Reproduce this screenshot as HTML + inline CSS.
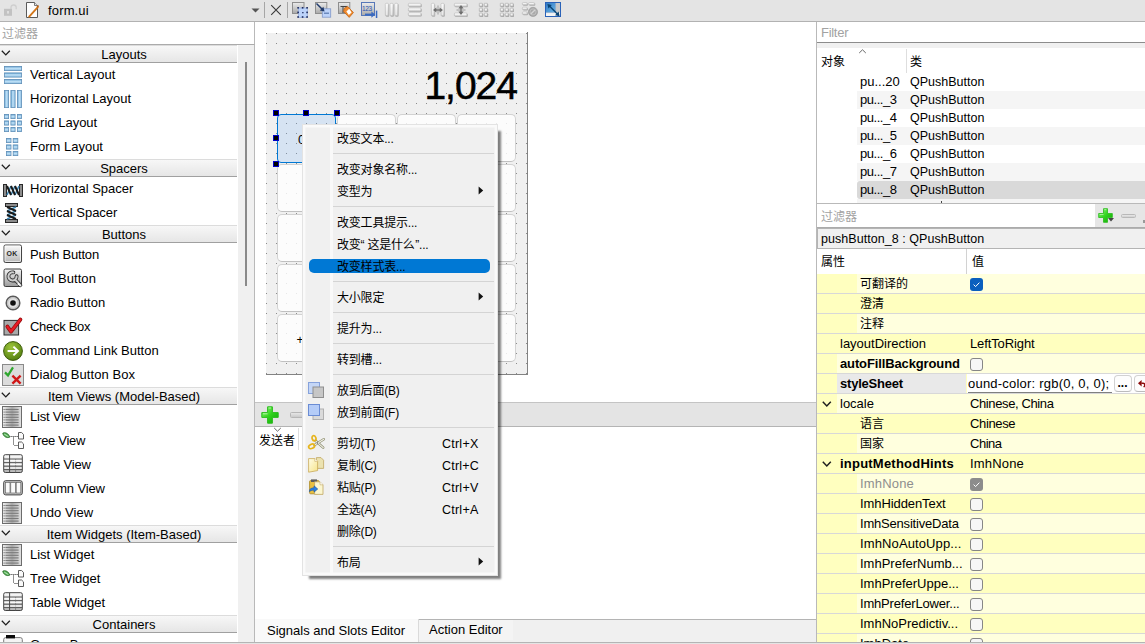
<!DOCTYPE html><html><head><meta charset="utf-8"><title>Qt Designer</title><style>
*{box-sizing:border-box}
html,body{margin:0;padding:0}
body{width:1145px;height:644px;position:relative;overflow:hidden;background:#f0f0f0;font:13px/16px "Liberation Sans","Noto Sans CJK SC",sans-serif;color:#000}
.a{position:absolute}
.t{position:absolute;white-space:nowrap;height:16px;line-height:16px}
.c{font-size:12px}
.hd{position:absolute;left:0;width:237px;height:18px;border-top:1px solid #dcdcdc;border-bottom:1px solid #a0a0a0;background:linear-gradient(#f7f7f7,#e6e6e6)}
.b{font-weight:bold}
.btn{position:absolute;width:59px;height:48px;border:1px solid #d2d2d2;border-bottom-color:#c0c0c0;border-radius:5px;background:rgba(255,255,255,.8)}
.mi{position:absolute;left:337px;font-size:12px;letter-spacing:-0.2px}
.sep{position:absolute;left:333px;width:161px;height:1px;background:#d4d4d4}
.cb{position:absolute;left:970px;width:13px;height:13px;border:1px solid #868686;border-radius:3px;background:#f6f6f6}
svg{position:absolute;overflow:visible}
</style></head><body>
<div class="a" style="left:0;top:0;width:1145px;height:22px;background:#e4e4e4;border-bottom:1px solid #b2b2b2"></div>
<svg style="left:3px;top:3px" width="14" height="14" viewBox="0 0 14 14"><path d="M8 7 V4.6 A2.6 2.6 0 0 1 13.2 4.6 V6.3" fill="none" stroke="#cfcfcf" stroke-width="1.3"/><rect x="1" y="5.8" width="8" height="7" fill="#c2c2c2"/><rect x="4" y="8" width="2" height="2.6" fill="#dedede"/></svg>
<svg style="left:26px;top:2px" width="13" height="16" viewBox="0 0 13 16"><path d="M0.5 0.5 H8.5 L11.5 3.5 V15.5 H0.5 Z" fill="#fdfdfd" stroke="#5a5a5a" stroke-width="1"/><path d="M8.5 0.5 V3.5 H11.5" fill="#e8e8e8" stroke="#5a5a5a" stroke-width=".8"/><path d="M3.2 14.6 L11.8 5.2" stroke="#d2761a" stroke-width="1.9" stroke-linecap="round"/><path d="M11 5 L12.6 3.6" stroke="#b85c10" stroke-width="1.4"/></svg>
<div class="t " style="letter-spacing:0.152px;left:48px;top:3px;">form.ui</div>
<svg style="left:251px;top:8px" width="9" height="5" viewBox="0 0 9 5"><path d="M0.5 0.5 H8.5 L4.5 4.5 Z" fill="#555"/></svg>
<div class="a" style="left:264px;top:2px;width:1px;height:16px;background:#a6a6a6"></div>
<svg style="left:270px;top:4px" width="12" height="12" viewBox="0 0 12 12"><path d="M1.2 1.2 L10.8 10.8 M10.8 1.2 L1.2 10.8" stroke="#3a3a3a" stroke-width="1.1"/></svg>
<div class="a" style="left:287px;top:2px;width:1px;height:16px;background:#a6a6a6"></div>
<svg style="left:292px;top:2px" width="16" height="16" viewBox="0 0 16 16"><defs><linearGradient id="gq" x1="0" y1="0" x2="0" y2="1"><stop offset="0" stop-color="#ececec"/><stop offset="1" stop-color="#a8a8a8"/></linearGradient><linearGradient id="gb" x1="0" y1="0" x2="0" y2="1"><stop offset="0" stop-color="#f6f6f6"/><stop offset="1" stop-color="#c6c6c6"/></linearGradient></defs><rect x="0.5" y="0.5" width="11.5" height="11" fill="url(#gq)" stroke="#8e8e8e"/><rect x="6.3" y="6" width="9" height="9.3" fill="#bcd3fa" stroke="#8aa6de" stroke-width=".6"/><g fill="#1c2a5c"><rect x="5.3" y="5" width="1.6" height="1.6"/><rect x="9.8" y="5" width="1.6" height="1.6"/><rect x="14.3" y="5" width="1.6" height="1.6"/><rect x="5.3" y="9.6" width="1.6" height="1.6"/><rect x="14.3" y="9.6" width="1.6" height="1.6"/><rect x="5.3" y="14.2" width="1.6" height="1.6"/><rect x="9.8" y="14.2" width="1.6" height="1.6"/><rect x="14.3" y="14.2" width="1.6" height="1.6"/><rect x="10.2" y="10" width="1.3" height="1.3"/></g></svg>
<svg style="left:315px;top:2px" width="16" height="16" viewBox="0 0 16 16"><rect x="0.5" y="0.5" width="11.3" height="11" fill="url(#gq)" stroke="#8e8e8e"/><rect x="7.3" y="6.8" width="8.4" height="8.4" fill="#bcd3fa" stroke="#8098c8" stroke-width=".8"/><path d="M1.5 1.5 L8 8" stroke="#203a6a" stroke-width="1.5"/><path d="M9.6 9.6 L4.8 8.4 L8.4 4.8 Z" fill="#203a6a"/><rect x="9" y="10.6" width="5" height="1.2" fill="#5878b0"/></svg>
<svg style="left:338px;top:2px" width="16" height="16" viewBox="0 0 16 16"><rect x="0.5" y="0.5" width="11.3" height="11" fill="url(#gq)" stroke="#8e8e8e"/><path d="M2.5 4.5 H9" stroke="#444" stroke-width="1"/><path d="M5 4.5 V11" stroke="#444" stroke-width="1"/><path d="M6.2 6.4 L9.6 4.4 L15.4 10.6 L11.2 15.4 L5.6 9.6 Z" fill="#ee8a2e" stroke="#c46210" stroke-width=".8"/><path d="M8.4 9.4 L11.2 6.8 L13.6 10.4 L10.8 13 Z" fill="#fff"/></svg>
<svg style="left:361px;top:2px" width="17" height="16" viewBox="0 0 17 16"><rect x="0.5" y="0.5" width="13" height="13" fill="url(#gq)" stroke="#5878b8"/><text x="1" y="8.5" font-family="Liberation Sans,sans-serif" font-size="6.5" fill="#2a52b0" letter-spacing="-.4">123</text><path d="M4 12.6 H11" stroke="#3a6ac0" stroke-width="2"/><path d="M10.4 9.4 L14.2 12.6 L10.4 15.8 Z" fill="#3a6ac0"/><rect x="14.8" y="8.6" width="1.5" height="7.4" fill="#3a6ac0"/></svg>
<svg style="left:385px;top:3px" width="14" height="14" viewBox="0 0 14 14"><rect x="1.0" y="1.0" width="3.2" height="12.8" rx="1" fill="#9c9c9c" fill-opacity=".75"/><rect x="0.3" y="0.3" width="3.2" height="12.8" rx="1" fill="url(#gb)" stroke="#b9b9b9" stroke-width=".6"/><rect x="0.8999999999999999" y="0.8999999999999999" width="1.6" height="11.200000000000001" rx="0.5" fill="#fff" fill-opacity=".55"/><rect x="5.7" y="1.0" width="3.2" height="12.8" rx="1" fill="#9c9c9c" fill-opacity=".75"/><rect x="5" y="0.3" width="3.2" height="12.8" rx="1" fill="url(#gb)" stroke="#b9b9b9" stroke-width=".6"/><rect x="5.6" y="0.8999999999999999" width="1.6" height="11.200000000000001" rx="0.5" fill="#fff" fill-opacity=".55"/><rect x="10.399999999999999" y="1.0" width="3.2" height="12.8" rx="1" fill="#9c9c9c" fill-opacity=".75"/><rect x="9.7" y="0.3" width="3.2" height="12.8" rx="1" fill="url(#gb)" stroke="#b9b9b9" stroke-width=".6"/><rect x="10.299999999999999" y="0.8999999999999999" width="1.6" height="11.200000000000001" rx="0.5" fill="#fff" fill-opacity=".55"/></svg>
<svg style="left:408px;top:3px" width="14" height="14" viewBox="0 0 14 14"><rect x="1.0" y="1.0" width="12.8" height="3.2" rx="1" fill="#9c9c9c" fill-opacity=".75"/><rect x="0.3" y="0.3" width="12.8" height="3.2" rx="1" fill="url(#gb)" stroke="#b9b9b9" stroke-width=".6"/><rect x="0.8999999999999999" y="0.8999999999999999" width="11.200000000000001" height="1.6" rx="0.5" fill="#fff" fill-opacity=".55"/><rect x="1.0" y="5.7" width="12.8" height="3.2" rx="1" fill="#9c9c9c" fill-opacity=".75"/><rect x="0.3" y="5" width="12.8" height="3.2" rx="1" fill="url(#gb)" stroke="#b9b9b9" stroke-width=".6"/><rect x="0.8999999999999999" y="5.6" width="11.200000000000001" height="1.6" rx="0.5" fill="#fff" fill-opacity=".55"/><rect x="1.0" y="10.399999999999999" width="12.8" height="3.2" rx="1" fill="#9c9c9c" fill-opacity=".75"/><rect x="0.3" y="9.7" width="12.8" height="3.2" rx="1" fill="url(#gb)" stroke="#b9b9b9" stroke-width=".6"/><rect x="0.8999999999999999" y="10.299999999999999" width="11.200000000000001" height="1.6" rx="0.5" fill="#fff" fill-opacity=".55"/></svg>
<svg style="left:431px;top:3px" width="14" height="14" viewBox="0 0 14 14"><rect x="1.0" y="1.0" width="3.2" height="12.8" rx="1" fill="#9c9c9c" fill-opacity=".75"/><rect x="0.3" y="0.3" width="3.2" height="12.8" rx="1" fill="url(#gb)" stroke="#b9b9b9" stroke-width=".6"/><rect x="0.8999999999999999" y="0.8999999999999999" width="1.6" height="11.200000000000001" rx="0.5" fill="#fff" fill-opacity=".55"/><rect x="10.7" y="1.0" width="3.2" height="12.8" rx="1" fill="#9c9c9c" fill-opacity=".75"/><rect x="10" y="0.3" width="3.2" height="12.8" rx="1" fill="url(#gb)" stroke="#b9b9b9" stroke-width=".6"/><rect x="10.6" y="0.8999999999999999" width="1.6" height="11.200000000000001" rx="0.5" fill="#fff" fill-opacity=".55"/><path d="M3.5 7 H10.5" stroke="#6e6e6e" stroke-width="1.4"/><path d="M2 7 L5.4 4.4 V9.6 Z M12 7 L8.6 4.4 V9.6 Z" fill="#6e6e6e"/><path d="M7 2.5 V11.5" stroke="#8a8a8a" stroke-width=".8"/></svg>
<svg style="left:454px;top:3px" width="14" height="14" viewBox="0 0 14 14"><rect x="1.0" y="1.0" width="12.8" height="3.2" rx="1" fill="#9c9c9c" fill-opacity=".75"/><rect x="0.3" y="0.3" width="12.8" height="3.2" rx="1" fill="url(#gb)" stroke="#b9b9b9" stroke-width=".6"/><rect x="0.8999999999999999" y="0.8999999999999999" width="11.200000000000001" height="1.6" rx="0.5" fill="#fff" fill-opacity=".55"/><rect x="1.0" y="10.7" width="12.8" height="3.2" rx="1" fill="#9c9c9c" fill-opacity=".75"/><rect x="0.3" y="10" width="12.8" height="3.2" rx="1" fill="url(#gb)" stroke="#b9b9b9" stroke-width=".6"/><rect x="0.8999999999999999" y="10.6" width="11.200000000000001" height="1.6" rx="0.5" fill="#fff" fill-opacity=".55"/><path d="M7 3.5 V10.5" stroke="#6e6e6e" stroke-width="1.4"/><path d="M7 2 L4.4 5.4 H9.6 Z M7 12 L4.4 8.6 H9.6 Z" fill="#6e6e6e"/><path d="M2.5 7 H11.5" stroke="#8a8a8a" stroke-width=".8"/></svg>
<svg style="left:479px;top:3px" width="9" height="14" viewBox="0 0 9 14"><rect x="1.0" y="1.0" width="3.2" height="3.2" rx="0.4" fill="#9c9c9c" fill-opacity=".75"/><rect x="0.3" y="0.3" width="3.2" height="3.2" rx="0.4" fill="url(#gb)" stroke="#a4a4a4" stroke-width=".6"/><rect x="0.8999999999999999" y="0.8999999999999999" width="1.6" height="1.6" rx="0.2" fill="#fff" fill-opacity=".55"/><rect x="6.0" y="1.0" width="3.2" height="3.2" rx="0.4" fill="#9c9c9c" fill-opacity=".75"/><rect x="5.3" y="0.3" width="3.2" height="3.2" rx="0.4" fill="url(#gb)" stroke="#a4a4a4" stroke-width=".6"/><rect x="5.8999999999999995" y="0.8999999999999999" width="1.6" height="1.6" rx="0.2" fill="#fff" fill-opacity=".55"/><rect x="1.0" y="5.9" width="3.2" height="3.2" rx="0.4" fill="#9c9c9c" fill-opacity=".75"/><rect x="0.3" y="5.2" width="3.2" height="3.2" rx="0.4" fill="url(#gb)" stroke="#a4a4a4" stroke-width=".6"/><rect x="0.8999999999999999" y="5.8" width="1.6" height="1.6" rx="0.2" fill="#fff" fill-opacity=".55"/><rect x="6.0" y="5.9" width="3.2" height="3.2" rx="0.4" fill="#9c9c9c" fill-opacity=".75"/><rect x="5.3" y="5.2" width="3.2" height="3.2" rx="0.4" fill="url(#gb)" stroke="#a4a4a4" stroke-width=".6"/><rect x="5.8999999999999995" y="5.8" width="1.6" height="1.6" rx="0.2" fill="#fff" fill-opacity=".55"/><rect x="1.0" y="10.8" width="3.2" height="3.2" rx="0.4" fill="#9c9c9c" fill-opacity=".75"/><rect x="0.3" y="10.100000000000001" width="3.2" height="3.2" rx="0.4" fill="url(#gb)" stroke="#a4a4a4" stroke-width=".6"/><rect x="0.8999999999999999" y="10.700000000000001" width="1.6" height="1.6" rx="0.2" fill="#fff" fill-opacity=".55"/><rect x="6.0" y="10.8" width="3.2" height="3.2" rx="0.4" fill="#9c9c9c" fill-opacity=".75"/><rect x="5.3" y="10.100000000000001" width="3.2" height="3.2" rx="0.4" fill="url(#gb)" stroke="#a4a4a4" stroke-width=".6"/><rect x="5.8999999999999995" y="10.700000000000001" width="1.6" height="1.6" rx="0.2" fill="#fff" fill-opacity=".55"/></svg>
<svg style="left:500px;top:3px" width="14" height="14" viewBox="0 0 14 14"><rect x="1.0" y="1.0" width="3.2" height="3.2" rx="0.4" fill="#9c9c9c" fill-opacity=".75"/><rect x="0.3" y="0.3" width="3.2" height="3.2" rx="0.4" fill="url(#gb)" stroke="#a4a4a4" stroke-width=".6"/><rect x="0.8999999999999999" y="0.8999999999999999" width="1.6" height="1.6" rx="0.2" fill="#fff" fill-opacity=".55"/><rect x="5.9" y="1.0" width="3.2" height="3.2" rx="0.4" fill="#9c9c9c" fill-opacity=".75"/><rect x="5.2" y="0.3" width="3.2" height="3.2" rx="0.4" fill="url(#gb)" stroke="#a4a4a4" stroke-width=".6"/><rect x="5.8" y="0.8999999999999999" width="1.6" height="1.6" rx="0.2" fill="#fff" fill-opacity=".55"/><rect x="10.8" y="1.0" width="3.2" height="3.2" rx="0.4" fill="#9c9c9c" fill-opacity=".75"/><rect x="10.100000000000001" y="0.3" width="3.2" height="3.2" rx="0.4" fill="url(#gb)" stroke="#a4a4a4" stroke-width=".6"/><rect x="10.700000000000001" y="0.8999999999999999" width="1.6" height="1.6" rx="0.2" fill="#fff" fill-opacity=".55"/><rect x="1.0" y="5.9" width="3.2" height="3.2" rx="0.4" fill="#9c9c9c" fill-opacity=".75"/><rect x="0.3" y="5.2" width="3.2" height="3.2" rx="0.4" fill="url(#gb)" stroke="#a4a4a4" stroke-width=".6"/><rect x="0.8999999999999999" y="5.8" width="1.6" height="1.6" rx="0.2" fill="#fff" fill-opacity=".55"/><rect x="5.9" y="5.9" width="3.2" height="3.2" rx="0.4" fill="#9c9c9c" fill-opacity=".75"/><rect x="5.2" y="5.2" width="3.2" height="3.2" rx="0.4" fill="url(#gb)" stroke="#a4a4a4" stroke-width=".6"/><rect x="5.8" y="5.8" width="1.6" height="1.6" rx="0.2" fill="#fff" fill-opacity=".55"/><rect x="10.8" y="5.9" width="3.2" height="3.2" rx="0.4" fill="#9c9c9c" fill-opacity=".75"/><rect x="10.100000000000001" y="5.2" width="3.2" height="3.2" rx="0.4" fill="url(#gb)" stroke="#a4a4a4" stroke-width=".6"/><rect x="10.700000000000001" y="5.8" width="1.6" height="1.6" rx="0.2" fill="#fff" fill-opacity=".55"/><rect x="1.0" y="10.8" width="3.2" height="3.2" rx="0.4" fill="#9c9c9c" fill-opacity=".75"/><rect x="0.3" y="10.100000000000001" width="3.2" height="3.2" rx="0.4" fill="url(#gb)" stroke="#a4a4a4" stroke-width=".6"/><rect x="0.8999999999999999" y="10.700000000000001" width="1.6" height="1.6" rx="0.2" fill="#fff" fill-opacity=".55"/><rect x="5.9" y="10.8" width="3.2" height="3.2" rx="0.4" fill="#9c9c9c" fill-opacity=".75"/><rect x="5.2" y="10.100000000000001" width="3.2" height="3.2" rx="0.4" fill="url(#gb)" stroke="#a4a4a4" stroke-width=".6"/><rect x="5.8" y="10.700000000000001" width="1.6" height="1.6" rx="0.2" fill="#fff" fill-opacity=".55"/><rect x="10.8" y="10.8" width="3.2" height="3.2" rx="0.4" fill="#9c9c9c" fill-opacity=".75"/><rect x="10.100000000000001" y="10.100000000000001" width="3.2" height="3.2" rx="0.4" fill="url(#gb)" stroke="#a4a4a4" stroke-width=".6"/><rect x="10.700000000000001" y="10.700000000000001" width="1.6" height="1.6" rx="0.2" fill="#fff" fill-opacity=".55"/></svg>
<svg style="left:522px;top:2px" width="16" height="16" viewBox="0 0 16 16"><rect x="1.0" y="1.2" width="5" height="2.6" rx="1" fill="#9c9c9c" fill-opacity=".75"/><rect x="0.3" y="0.5" width="5" height="2.6" rx="1" fill="url(#gb)" stroke="#b9b9b9" stroke-width=".6"/><rect x="0.8999999999999999" y="1.1" width="3.4" height="1.0" rx="0.5" fill="#fff" fill-opacity=".55"/><rect x="7.3" y="1.2" width="6" height="2.6" rx="1" fill="#9c9c9c" fill-opacity=".75"/><rect x="6.6" y="0.5" width="6" height="2.6" rx="1" fill="url(#gb)" stroke="#b9b9b9" stroke-width=".6"/><rect x="7.199999999999999" y="1.1" width="4.4" height="1.0" rx="0.5" fill="#fff" fill-opacity=".55"/><rect x="1.0" y="5.9" width="5" height="2.6" rx="1" fill="#9c9c9c" fill-opacity=".75"/><rect x="0.3" y="5.2" width="5" height="2.6" rx="1" fill="url(#gb)" stroke="#b9b9b9" stroke-width=".6"/><rect x="0.8999999999999999" y="5.8" width="3.4" height="1.0" rx="0.5" fill="#fff" fill-opacity=".55"/><rect x="1.0" y="10.6" width="5" height="2.6" rx="1" fill="#9c9c9c" fill-opacity=".75"/><rect x="0.3" y="9.9" width="5" height="2.6" rx="1" fill="url(#gb)" stroke="#b9b9b9" stroke-width=".6"/><rect x="0.8999999999999999" y="10.5" width="3.4" height="1.0" rx="0.5" fill="#fff" fill-opacity=".55"/><circle cx="11" cy="9.9" r="4.6" fill="#a9a9a9" stroke="#989898" stroke-width=".6"/><path d="M8.8 12 L13.2 7.8" stroke="#d4d4d4" stroke-width="1.3"/><circle cx="11" cy="9.9" r="3" fill="none" stroke="#c4c4c4" stroke-width=".8"/></svg>
<svg style="left:545px;top:2px" width="16" height="15" viewBox="0 0 16 15"><defs><linearGradient id="gz" x1="0" y1="0" x2="1" y2="1"><stop offset="0" stop-color="#2f78c4"/><stop offset="1" stop-color="#86d0f2"/></linearGradient></defs><rect x="0.5" y="0.5" width="15" height="14" fill="url(#gz)" stroke="#2a62b8"/><rect x="10.6" y="1" width="4.4" height="13" fill="#c9c9c9"/><rect x="1" y="10.6" width="14" height="3.4" fill="#f4f4f4"/><path d="M10.6 1 V10.6 H1" fill="none" stroke="#8fa8c8" stroke-width=".6"/><path d="M4 3.6 L12.4 12" stroke="#0a4474" stroke-width="1.4"/><path d="M2.4 2 L6.8 3 L3.4 6.4 Z M14.6 14.2 L10 13.2 L13.6 9.6 Z" fill="#0a4474"/></svg>
<div class="a" style="left:0;top:22px;width:255px;height:23px;background:#fff;border-right:1px solid #b9b9b9;border-bottom:1px solid #ababab"></div>
<div class="t c" style="left:2px;top:25.5px;color:#a2a2a2">过滤器</div>
<div class="a" style="left:0;top:45px;width:238px;height:597px;background:#fff"></div>
<div class="a" style="left:238px;top:45px;width:17px;height:597px;background:#f0f0f0;border-right:1px solid #b9b9b9"></div>
<div class="a" style="left:245px;top:62px;width:2px;height:224px;background:#8a8a8a"></div>
<svg width="0" height="0" style="left:0;top:0"><defs><linearGradient id="lb" x1="0" y1="0" x2="0" y2="1"><stop offset="0" stop-color="#5fa0d0"/><stop offset=".45" stop-color="#bfe0f6"/><stop offset="1" stop-color="#8fc0e4"/></linearGradient>
<linearGradient id="lv" x1="0" y1="0" x2="1" y2="0"><stop offset="0" stop-color="#5fa0d0"/><stop offset=".45" stop-color="#bfe0f6"/><stop offset="1" stop-color="#8fc0e4"/></linearGradient>
<linearGradient id="gg" x1="0" y1="0" x2="0" y2="1"><stop offset="0" stop-color="#f4f4f4"/><stop offset="1" stop-color="#9c9c9c"/></linearGradient>
<linearGradient id="gl" x1="0" y1="0" x2="1" y2="0"><stop offset="0" stop-color="#f0f0f0"/><stop offset=".5" stop-color="#a8a8a8"/><stop offset="1" stop-color="#e4e4e4"/></linearGradient>
<linearGradient id="gp" x1="0" y1="0" x2="0" y2="1"><stop offset="0" stop-color="#fbfbfb"/><stop offset="1" stop-color="#b8b8b8"/></linearGradient>
<radialGradient id="grn" cx=".4" cy=".3" r=".8"><stop offset="0" stop-color="#9cc43a"/><stop offset="1" stop-color="#4e7a0c"/></radialGradient>
</defs></svg>
<div class="hd" style="top:45px"></div>
<svg style="left:1px;top:50px" width="10" height="6" viewBox="0 0 10 6"><path d="M0.8 0.8 L4.8 4.9 L8.8 0.8" fill="none" stroke="#1e1e1e" stroke-width="1.3"/></svg>
<div class="t" style="left:4px;width:240px;text-align:center;top:47px">Layouts</div>
<svg style="left:4px;top:66px" width="18" height="18" viewBox="0 0 18 18"><rect x="0.4" y="0.4" width="17.2" height="4.2" fill="url(#lb)" stroke="#5f8fb8" stroke-width=".8"/><rect x="0.4" y="6.9" width="17.2" height="4.2" fill="url(#lb)" stroke="#5f8fb8" stroke-width=".8"/><rect x="0.4" y="13.4" width="17.2" height="4.2" fill="url(#lb)" stroke="#5f8fb8" stroke-width=".8"/></svg>
<div class="t " style="left:30px;top:67px;">Vertical Layout</div>
<svg style="left:4px;top:90px" width="18" height="18" viewBox="0 0 18 18"><rect x="0.4" y="0.4" width="4.2" height="17.2" fill="url(#lv)" stroke="#5f8fb8" stroke-width=".8"/><rect x="6.9" y="0.4" width="4.2" height="17.2" fill="url(#lv)" stroke="#5f8fb8" stroke-width=".8"/><rect x="13.4" y="0.4" width="4.2" height="17.2" fill="url(#lv)" stroke="#5f8fb8" stroke-width=".8"/></svg>
<div class="t " style="left:30px;top:91px;">Horizontal Layout</div>
<svg style="left:4px;top:114px" width="18" height="18" viewBox="0 0 18 18"><rect x="0.4" y="0.4" width="4.2" height="4.2" fill="url(#lb)" stroke="#5f8fb8" stroke-width=".8"/><rect x="6.9" y="0.4" width="4.2" height="4.2" fill="url(#lb)" stroke="#5f8fb8" stroke-width=".8"/><rect x="13.4" y="0.4" width="4.2" height="4.2" fill="url(#lb)" stroke="#5f8fb8" stroke-width=".8"/><rect x="0.4" y="6.9" width="4.2" height="4.2" fill="url(#lb)" stroke="#5f8fb8" stroke-width=".8"/><rect x="6.9" y="6.9" width="4.2" height="4.2" fill="url(#lb)" stroke="#5f8fb8" stroke-width=".8"/><rect x="13.4" y="6.9" width="4.2" height="4.2" fill="url(#lb)" stroke="#5f8fb8" stroke-width=".8"/><rect x="0.4" y="13.4" width="4.2" height="4.2" fill="url(#lb)" stroke="#5f8fb8" stroke-width=".8"/><rect x="6.9" y="13.4" width="4.2" height="4.2" fill="url(#lb)" stroke="#5f8fb8" stroke-width=".8"/><rect x="13.4" y="13.4" width="4.2" height="4.2" fill="url(#lb)" stroke="#5f8fb8" stroke-width=".8"/></svg>
<div class="t " style="left:30px;top:115px;">Grid Layout</div>
<svg style="left:6px;top:138px" width="13" height="18" viewBox="0 0 13 18"><rect x="0.4" y="0.4" width="4.6" height="4.2" fill="url(#lb)" stroke="#5f8fb8" stroke-width=".8"/><rect x="7.2" y="0.4" width="4.6" height="4.2" fill="url(#lb)" stroke="#5f8fb8" stroke-width=".8"/><rect x="0.4" y="6.9" width="4.6" height="4.2" fill="url(#lb)" stroke="#5f8fb8" stroke-width=".8"/><rect x="7.2" y="6.9" width="4.6" height="4.2" fill="url(#lb)" stroke="#5f8fb8" stroke-width=".8"/><rect x="0.4" y="13.4" width="4.6" height="4.2" fill="url(#lb)" stroke="#5f8fb8" stroke-width=".8"/><rect x="7.2" y="13.4" width="4.6" height="4.2" fill="url(#lb)" stroke="#5f8fb8" stroke-width=".8"/></svg>
<div class="t " style="left:30px;top:139px;">Form Layout</div>
<div class="hd" style="top:159px"></div>
<svg style="left:1px;top:164px" width="10" height="6" viewBox="0 0 10 6"><path d="M0.8 0.8 L4.8 4.9 L8.8 0.8" fill="none" stroke="#1e1e1e" stroke-width="1.3"/></svg>
<div class="t" style="left:4px;width:240px;text-align:center;top:161px">Spacers</div>
<svg style="left:3px;top:184px" width="20" height="13" viewBox="0 0 20 13"><rect x="0.5" y="0.5" width="3" height="12" fill="#8c8c8c" stroke="#2a2a2a"/><rect x="16.5" y="0.5" width="3" height="12" fill="#8c8c8c" stroke="#2a2a2a"/><path d="M4 11 L8 2 M8 11 L12 2 M12 11 L16 2" stroke="#3c86b4" stroke-width="1.6"/><path d="M4 2 L8 11 M8 2 L12 11 M12 2 L16 11" stroke="#1a1a1a" stroke-width="2"/></svg>
<div class="t " style="left:30px;top:181px;">Horizontal Spacer</div>
<svg style="left:5px;top:203px" width="13" height="20" viewBox="0 0 13 20"><rect x="0.5" y="0.5" width="12" height="3" fill="#8c8c8c" stroke="#2a2a2a"/><rect x="0.5" y="16.5" width="12" height="3" fill="#8c8c8c" stroke="#2a2a2a"/><path d="M11 4 L2 8 M11 8 L2 12 M11 12 L2 16" stroke="#3c86b4" stroke-width="1.6"/><path d="M2 4 L11 8 M2 8 L11 12 M2 12 L11 16" stroke="#1a1a1a" stroke-width="2"/></svg>
<div class="t " style="left:30px;top:205px;">Vertical Spacer</div>
<div class="hd" style="top:225px"></div>
<svg style="left:1px;top:230px" width="10" height="6" viewBox="0 0 10 6"><path d="M0.8 0.8 L4.8 4.9 L8.8 0.8" fill="none" stroke="#1e1e1e" stroke-width="1.3"/></svg>
<div class="t" style="left:4px;width:240px;text-align:center;top:227px">Buttons</div>
<svg style="left:3px;top:244px" width="20" height="20" viewBox="0 0 20 20"><rect x="1.6" y="1.6" width="17.5" height="17.5" rx="1.5" fill="#000" fill-opacity=".18"/><rect x="1" y="1" width="17.5" height="17.5" rx="1.5" fill="url(#gp)" stroke="#444" stroke-width="1"/><rect x="2" y="2" width="15.5" height="15.5" rx="1" fill="none" stroke="#fff" stroke-opacity=".8" stroke-width=".8"/><text x="3.6" y="12.3" font-family="Liberation Sans,sans-serif" font-size="7" font-weight="bold" fill="#2a2a2a" letter-spacing=".2">OK</text></svg>
<div class="t " style="letter-spacing:-0.166px;left:30px;top:247px;">Push Button</div>
<svg style="left:3px;top:268px" width="20" height="20" viewBox="0 0 20 20"><rect x="1.6" y="1.6" width="17.5" height="17.5" rx="1.5" fill="#000" fill-opacity=".18"/><rect x="1" y="1" width="17.5" height="17.5" rx="1.5" fill="url(#gg)" stroke="#3c3c3c" stroke-width="1"/><path d="M10.4 4.4 A4.1 4.1 0 1 0 13.6 8.2 M12 11.6 L17.4 17.2" fill="none" stroke="#2c2c2c" stroke-width="3.8" stroke-linecap="round"/><path d="M10.4 4.4 A4.1 4.1 0 1 0 13.6 8.2 M12 11.6 L17.4 17.2" fill="none" stroke="#cdcdcd" stroke-width="2.1" stroke-linecap="round"/><path d="M15.4 14.4 L19 19 L14.4 16.4 Z" fill="#f8f8f8"/></svg>
<div class="t " style="letter-spacing:0.087px;left:30px;top:271px;">Tool Button</div>
<svg style="left:5px;top:295px" width="16" height="16" viewBox="0 0 16 16"><circle cx="8" cy="8" r="6.8" fill="#e0e0e0" stroke="#5a5a5a" stroke-width="1.5"/><circle cx="8" cy="8" r="5.4" fill="none" stroke="#bdbdbd" stroke-width="1"/><circle cx="8" cy="8" r="2.8" fill="#101010"/></svg>
<div class="t " style="left:30px;top:295px;">Radio Button</div>
<svg style="left:3px;top:317px" width="20" height="20" viewBox="0 0 20 20"><rect x="1" y="3.4" width="14.6" height="14.6" fill="#a9a9a9" stroke="#2e2e2e" stroke-width="1"/><path d="M4.4 9.6 L8 14.6 L17.4 2.6" fill="none" stroke="#8e0a0a" stroke-width="3.8" stroke-linejoin="round" stroke-linecap="round"/><path d="M4.4 9.6 L8 14.6 L17.4 2.6" fill="none" stroke="#e81c24" stroke-width="2.4" stroke-linejoin="round" stroke-linecap="round"/></svg>
<div class="t " style="letter-spacing:-0.297px;left:30px;top:319px;">Check Box</div>
<svg style="left:3px;top:341px" width="20" height="20" viewBox="0 0 20 20"><circle cx="10" cy="10" r="9.4" fill="url(#grn)" stroke="#3c5c0a" stroke-width="1"/><path d="M4.6 10 H14" stroke="#fff" stroke-width="2"/><path d="M10.4 5.6 L15 10 L10.4 14.4" fill="none" stroke="#fff" stroke-width="2"/></svg>
<div class="t " style="left:30px;top:343px;">Command Link Button</div>
<svg style="left:2px;top:364px" width="22" height="22" viewBox="0 0 22 22"><rect x="0.5" y="0.5" width="21" height="21" fill="#dcdcdc" stroke="#8a8a8a"/><path d="M3 8.4 L6 11.4 L11 3.4" fill="none" stroke="#2ea62e" stroke-width="2.2"/><path d="M10.4 11.6 L18.6 19.6 M18.6 11.6 L10.4 19.6" stroke="#d01818" stroke-width="2.4"/></svg>
<div class="t " style="letter-spacing:0.054px;left:30px;top:367px;">Dialog Button Box</div>
<div class="hd" style="top:387px"></div>
<svg style="left:1px;top:392px" width="10" height="6" viewBox="0 0 10 6"><path d="M0.8 0.8 L4.8 4.9 L8.8 0.8" fill="none" stroke="#1e1e1e" stroke-width="1.3"/></svg>
<div class="t" style="left:4px;width:240px;text-align:center;top:389px">Item Views (Model-Based)</div>
<svg style="left:2px;top:406px" width="20" height="22" viewBox="0 0 20 22"><rect x="0.5" y="0.5" width="19" height="21" fill="url(#gl)" stroke="#6c6c6c"/><path d="M3.4 3.5 H16.6" stroke="#7a7a7a" stroke-width="1.1"/><rect x="1.6" y="3.0" width="1" height="1" fill="#5a5a5a"/><path d="M3.4 6.1 H16.6" stroke="#7a7a7a" stroke-width="1.1"/><rect x="1.6" y="5.6" width="1" height="1" fill="#5a5a5a"/><path d="M3.4 8.7 H16.6" stroke="#7a7a7a" stroke-width="1.1"/><rect x="1.6" y="8.2" width="1" height="1" fill="#5a5a5a"/><path d="M3.4 11.3 H16.6" stroke="#7a7a7a" stroke-width="1.1"/><rect x="1.6" y="10.8" width="1" height="1" fill="#5a5a5a"/><path d="M3.4 13.9 H16.6" stroke="#7a7a7a" stroke-width="1.1"/><rect x="1.6" y="13.4" width="1" height="1" fill="#5a5a5a"/><path d="M3.4 16.5 H16.6" stroke="#7a7a7a" stroke-width="1.1"/><rect x="1.6" y="16.0" width="1" height="1" fill="#5a5a5a"/><path d="M3.4 19.1 H16.6" stroke="#7a7a7a" stroke-width="1.1"/><rect x="1.6" y="18.6" width="1" height="1" fill="#5a5a5a"/></svg>
<div class="t " style="letter-spacing:-0.2px;left:30px;top:409px;">List View</div>
<svg style="left:2px;top:432px" width="22" height="19" viewBox="0 0 22 19"><path d="M0.8 1.2 C3 0 6.8 1.4 7.6 5.2 C5 6.4 1.4 4.6 0.8 1.2 Z" fill="#5cb45c" stroke="#1c641c" stroke-width=".9"/><path d="M2.2 2 L6.4 4.6" stroke="#c4ecc4" stroke-width=".8"/><path d="M8.6 4.5 H15.6 M11.5 5.5 V13.5 M12.5 13.5 H15.6" fill="none" stroke="#222" stroke-width="1" stroke-dasharray="1 1"/><path d="M16.5 0.5 H19.6 L21.5 2.4 V7 H16.5 Z" fill="#fafafa" stroke="#4c4c4c" stroke-width=".9"/><path d="M16.5 10 H19.6 L21.5 11.9 V16.5 H16.5 Z" fill="#fafafa" stroke="#4c4c4c" stroke-width=".9"/></svg>
<div class="t " style="letter-spacing:-0.312px;left:30px;top:433px;">Tree View</div>
<svg style="left:3px;top:454px" width="20" height="20" viewBox="0 0 20 20"><rect x="0.7" y="0.7" width="18.6" height="17.8" rx="1.6" fill="url(#gp)" stroke="#444" stroke-width="1"/><path d="M1 5 H19" stroke="#4a4a4a" stroke-width=".9"/><path d="M1 8.6 H19" stroke="#4a4a4a" stroke-width=".9"/><path d="M1 12.2 H19" stroke="#4a4a4a" stroke-width=".9"/><path d="M1 15.6 H19" stroke="#4a4a4a" stroke-width=".9"/><path d="M6.6 1 V18.4" stroke="#4a4a4a" stroke-width="1"/><path d="M12.6 5 V18.4" stroke="#6a6a6a" stroke-width=".7"/><path d="M7.2 6.8 H18.6" stroke="#fff" stroke-opacity=".85" stroke-width="1.3"/><path d="M1.4 6.8 H6" stroke="#fff" stroke-opacity=".85" stroke-width="1.3"/><path d="M7.2 10.4 H18.6" stroke="#fff" stroke-opacity=".85" stroke-width="1.3"/><path d="M1.4 10.4 H6" stroke="#fff" stroke-opacity=".85" stroke-width="1.3"/><path d="M7.2 14 H18.6" stroke="#fff" stroke-opacity=".85" stroke-width="1.3"/><path d="M1.4 14 H6" stroke="#fff" stroke-opacity=".85" stroke-width="1.3"/></svg>
<div class="t " style="letter-spacing:-0.184px;left:30px;top:457px;">Table View</div>
<svg style="left:3px;top:480px" width="20" height="16" viewBox="0 0 20 16"><rect x="0.7" y="0.7" width="18.6" height="14.2" rx="2" fill="#cacaca" stroke="#444" stroke-width="1"/><rect x="2.4" y="2.6" width="4.6" height="10.4" fill="#fafafa" stroke="#555" stroke-width=".6"/><rect x="7.8" y="2.6" width="4.6" height="10.4" fill="#fafafa" stroke="#555" stroke-width=".6"/><rect x="13.2" y="2.6" width="4.6" height="10.4" fill="#fafafa" stroke="#555" stroke-width=".6"/></svg>
<div class="t " style="letter-spacing:-0.142px;left:30px;top:481px;">Column View</div>
<svg style="left:2px;top:502px" width="20" height="22" viewBox="0 0 20 22"><rect x="0.5" y="0.5" width="19" height="21" fill="url(#gl)" stroke="#6c6c6c"/><path d="M3.4 3.5 H16.6" stroke="#7a7a7a" stroke-width="1.1"/><rect x="1.6" y="3.0" width="1" height="1" fill="#5a5a5a"/><path d="M3.4 6.1 H16.6" stroke="#7a7a7a" stroke-width="1.1"/><rect x="1.6" y="5.6" width="1" height="1" fill="#5a5a5a"/><path d="M3.4 8.7 H16.6" stroke="#7a7a7a" stroke-width="1.1"/><rect x="1.6" y="8.2" width="1" height="1" fill="#5a5a5a"/><path d="M3.4 11.3 H16.6" stroke="#7a7a7a" stroke-width="1.1"/><rect x="1.6" y="10.8" width="1" height="1" fill="#5a5a5a"/><path d="M3.4 13.9 H16.6" stroke="#7a7a7a" stroke-width="1.1"/><rect x="1.6" y="13.4" width="1" height="1" fill="#5a5a5a"/><path d="M3.4 16.5 H16.6" stroke="#7a7a7a" stroke-width="1.1"/><rect x="1.6" y="16.0" width="1" height="1" fill="#5a5a5a"/><path d="M3.4 19.1 H16.6" stroke="#7a7a7a" stroke-width="1.1"/><rect x="1.6" y="18.6" width="1" height="1" fill="#5a5a5a"/></svg>
<div class="t " style="letter-spacing:0.073px;left:30px;top:505px;">Undo View</div>
<div class="hd" style="top:525px"></div>
<svg style="left:1px;top:530px" width="10" height="6" viewBox="0 0 10 6"><path d="M0.8 0.8 L4.8 4.9 L8.8 0.8" fill="none" stroke="#1e1e1e" stroke-width="1.3"/></svg>
<div class="t" style="left:4px;width:240px;text-align:center;top:527px">Item Widgets (Item-Based)</div>
<svg style="left:2px;top:544px" width="20" height="22" viewBox="0 0 20 22"><rect x="0.5" y="0.5" width="19" height="21" fill="url(#gl)" stroke="#6c6c6c"/><path d="M3.4 3.5 H16.6" stroke="#7a7a7a" stroke-width="1.1"/><rect x="1.6" y="3.0" width="1" height="1" fill="#5a5a5a"/><path d="M3.4 6.1 H16.6" stroke="#7a7a7a" stroke-width="1.1"/><rect x="1.6" y="5.6" width="1" height="1" fill="#5a5a5a"/><path d="M3.4 8.7 H16.6" stroke="#7a7a7a" stroke-width="1.1"/><rect x="1.6" y="8.2" width="1" height="1" fill="#5a5a5a"/><path d="M3.4 11.3 H16.6" stroke="#7a7a7a" stroke-width="1.1"/><rect x="1.6" y="10.8" width="1" height="1" fill="#5a5a5a"/><path d="M3.4 13.9 H16.6" stroke="#7a7a7a" stroke-width="1.1"/><rect x="1.6" y="13.4" width="1" height="1" fill="#5a5a5a"/><path d="M3.4 16.5 H16.6" stroke="#7a7a7a" stroke-width="1.1"/><rect x="1.6" y="16.0" width="1" height="1" fill="#5a5a5a"/><path d="M3.4 19.1 H16.6" stroke="#7a7a7a" stroke-width="1.1"/><rect x="1.6" y="18.6" width="1" height="1" fill="#5a5a5a"/></svg>
<div class="t " style="left:30px;top:547px;">List Widget</div>
<svg style="left:2px;top:570px" width="22" height="19" viewBox="0 0 22 19"><path d="M0.8 1.2 C3 0 6.8 1.4 7.6 5.2 C5 6.4 1.4 4.6 0.8 1.2 Z" fill="#5cb45c" stroke="#1c641c" stroke-width=".9"/><path d="M2.2 2 L6.4 4.6" stroke="#c4ecc4" stroke-width=".8"/><path d="M8.6 4.5 H15.6 M11.5 5.5 V13.5 M12.5 13.5 H15.6" fill="none" stroke="#222" stroke-width="1" stroke-dasharray="1 1"/><path d="M16.5 0.5 H19.6 L21.5 2.4 V7 H16.5 Z" fill="#fafafa" stroke="#4c4c4c" stroke-width=".9"/><path d="M16.5 10 H19.6 L21.5 11.9 V16.5 H16.5 Z" fill="#fafafa" stroke="#4c4c4c" stroke-width=".9"/></svg>
<div class="t " style="left:30px;top:571px;">Tree Widget</div>
<svg style="left:3px;top:592px" width="20" height="20" viewBox="0 0 20 20"><rect x="0.7" y="0.7" width="18.6" height="17.8" rx="1.6" fill="url(#gp)" stroke="#444" stroke-width="1"/><path d="M1 5 H19" stroke="#4a4a4a" stroke-width=".9"/><path d="M1 8.6 H19" stroke="#4a4a4a" stroke-width=".9"/><path d="M1 12.2 H19" stroke="#4a4a4a" stroke-width=".9"/><path d="M1 15.6 H19" stroke="#4a4a4a" stroke-width=".9"/><path d="M6.6 1 V18.4" stroke="#4a4a4a" stroke-width="1"/><path d="M12.6 5 V18.4" stroke="#6a6a6a" stroke-width=".7"/><path d="M7.2 6.8 H18.6" stroke="#fff" stroke-opacity=".85" stroke-width="1.3"/><path d="M1.4 6.8 H6" stroke="#fff" stroke-opacity=".85" stroke-width="1.3"/><path d="M7.2 10.4 H18.6" stroke="#fff" stroke-opacity=".85" stroke-width="1.3"/><path d="M1.4 10.4 H6" stroke="#fff" stroke-opacity=".85" stroke-width="1.3"/><path d="M7.2 14 H18.6" stroke="#fff" stroke-opacity=".85" stroke-width="1.3"/><path d="M1.4 14 H6" stroke="#fff" stroke-opacity=".85" stroke-width="1.3"/></svg>
<div class="t " style="left:30px;top:595px;">Table Widget</div>
<div class="hd" style="top:615px"></div>
<svg style="left:1px;top:620px" width="10" height="6" viewBox="0 0 10 6"><path d="M0.8 0.8 L4.8 4.9 L8.8 0.8" fill="none" stroke="#1e1e1e" stroke-width="1.3"/></svg>
<div class="t" style="left:4px;width:240px;text-align:center;top:617px">Containers</div>
<svg style="left:3px;top:635px" width="20" height="20" viewBox="0 0 20 20"><rect x="0.7" y="2.6" width="18.6" height="16" rx="2" fill="#f4f4f4" stroke="#7a7a7a" stroke-width="1"/><rect x="3" y="0" width="9" height="3.4" fill="#0a0a0a"/></svg>
<div class="t " style="left:30px;top:637px;">Group Box</div>
<div class="a" style="left:255px;top:22px;width:561px;height:381px;background:#fff"></div>
<div class="a" style="left:266px;top:33px;width:262px;height:342px;background-color:#f0f0f0;background-image:radial-gradient(circle at .5px .5px,#8c8c8c 0,#8c8c8c .55px,rgba(140,140,140,0) .95px);background-size:10px 10px;border-bottom:1px solid #828282"></div>
<div class="a" style="left:527px;top:32px;width:1px;height:343px;background:#828282"></div>
<div class="t" style="left:379px;top:62px;width:138px;height:48px;line-height:48px;text-align:right;font-size:39px;letter-spacing:-1px;-webkit-text-stroke:.5px #000">1,024</div>
<div class="btn" style="left:277px;top:114px;height:49px;background:rgba(100,170,255,.18);border-color:#0078d4;border-radius:4px"></div>
<div class="btn" style="left:337px;top:114px"></div>
<div class="btn" style="left:397px;top:114px"></div>
<div class="btn" style="left:457px;top:114px"></div>
<div class="btn" style="left:277px;top:164px"></div>
<div class="btn" style="left:337px;top:164px"></div>
<div class="btn" style="left:397px;top:164px"></div>
<div class="btn" style="left:457px;top:164px"></div>
<div class="btn" style="left:277px;top:214px"></div>
<div class="btn" style="left:337px;top:214px"></div>
<div class="btn" style="left:397px;top:214px"></div>
<div class="btn" style="left:457px;top:214px"></div>
<div class="btn" style="left:277px;top:264px"></div>
<div class="btn" style="left:337px;top:264px"></div>
<div class="btn" style="left:397px;top:264px"></div>
<div class="btn" style="left:457px;top:264px"></div>
<div class="btn" style="left:277px;top:314px"></div>
<div class="btn" style="left:337px;top:314px"></div>
<div class="btn" style="left:397px;top:314px"></div>
<div class="btn" style="left:457px;top:314px"></div>
<div class="t " style="left:298px;top:131.5px;">0</div>
<div class="t " style="left:296.5px;top:332px;font-size:12px">+</div>
<div class="a" style="left:273px;top:110px;width:6px;height:6px;background:#000;border:1px solid #0000c8"></div>
<div class="a" style="left:303px;top:110px;width:6px;height:6px;background:#000;border:1px solid #0000c8"></div>
<div class="a" style="left:334px;top:110px;width:6px;height:6px;background:#000;border:1px solid #0000c8"></div>
<div class="a" style="left:273px;top:135px;width:6px;height:6px;background:#000;border:1px solid #0000c8"></div>
<div class="a" style="left:273px;top:161px;width:6px;height:6px;background:#000;border:1px solid #0000c8"></div>
<div class="a" style="left:255px;top:402px;width:561px;height:25px;background:#e4e4e4;border-top:1px solid #c4c4c4;border-bottom:1px solid #b4b4b4"></div>
<svg style="left:261px;top:406px" width="18" height="18" viewBox="0 0 18 18"><defs><linearGradient id="pg1" x1="0" y1="0" x2="1" y2="1"><stop offset="0" stop-color="#98f880"/><stop offset=".5" stop-color="#30d41c"/><stop offset="1" stop-color="#10a408"/></linearGradient></defs><path d="M6.6 0.8 H11.4 V6.6 H17.2 V11.4 H11.4 V17.2 H6.6 V11.4 H0.8 V6.6 H6.6 Z" fill="url(#pg1)" stroke="#2cbc1e" stroke-width="1" stroke-linejoin="round"/><path d="M7.6 2 H10 M2 7.8 H6.6" stroke="#c8ffb8" stroke-width="1" stroke-opacity=".8"/></svg>
<div class="a" style="left:290px;top:412px;width:16px;height:6px;border-radius:1.5px;background:linear-gradient(#e6e6e6,#cacaca);border:1px solid #b6b6b6"></div>
<div class="a" style="left:255px;top:427px;width:561px;height:192px;background:#fff"></div>
<svg style="left:273px;top:427px" width="9" height="5" viewBox="0 0 9 5"><path d="M1.2 1 L4.5 4.2 L7.8 1" fill="none" stroke="#555" stroke-width=".9"/></svg>
<div class="t c" style="left:259px;top:432.5px;">发送者</div>
<div class="a" style="left:298px;top:428px;width:1px;height:22px;background:#dcdcdc"></div>
<div class="a" style="left:255px;top:619px;width:561px;height:24px;background:#f0f0f0;border-top:1px solid #b4b4b4"></div>
<div class="a" style="left:255px;top:619px;width:164px;height:23px;background:#f9f9f9;border-right:1px solid #dadada"></div>
<div class="a" style="left:419px;top:620px;width:94px;height:20px;background:#f4f4f4"></div>
<div class="t " style="left:267px;top:622.5px;">Signals and Slots Editor</div>
<div class="t " style="left:429px;top:621.5px;">Action Editor</div>
<div class="a" style="left:816px;top:22px;width:1px;height:620px;background:#b9b9b9"></div>
<div class="a" style="left:817px;top:22px;width:328px;height:21px;background:#fff;border-bottom:1px solid #8c8c8c"></div>
<div class="t " style="letter-spacing:-0.282px;left:821px;top:24.5px;color:#a2a2a2">Filter</div>
<div class="a" style="left:817px;top:48px;width:328px;height:155px;background:#fff"></div>
<svg style="left:858px;top:49px" width="9" height="5" viewBox="0 0 9 5"><path d="M1.2 4 L4.5 0.8 L7.8 4" fill="none" stroke="#555" stroke-width=".9"/></svg>
<div class="t c" style="left:821px;top:54px;">对象</div>
<div class="t c" style="left:910px;top:54px;">类</div>
<div class="a" style="left:906px;top:49px;width:1px;height:24px;background:#dedede"></div>
<div class="t " style="left:860px;top:74px;">pu...20</div>
<div class="t " style="left:910px;top:74px;font-size:12.5px">QPushButton</div>
<div class="a" style="left:857px;top:91px;width:288px;height:18px;background:#f5f5f5"></div>
<div class="t " style="letter-spacing:-0.467px;left:860px;top:92px;">pu..._3</div>
<div class="t " style="left:910px;top:92px;font-size:12.5px">QPushButton</div>
<div class="t " style="letter-spacing:-0.467px;left:860px;top:110px;">pu..._4</div>
<div class="t " style="left:910px;top:110px;font-size:12.5px">QPushButton</div>
<div class="a" style="left:857px;top:127px;width:288px;height:18px;background:#f5f5f5"></div>
<div class="t " style="letter-spacing:-0.467px;left:860px;top:128px;">pu..._5</div>
<div class="t " style="left:910px;top:128px;font-size:12.5px">QPushButton</div>
<div class="t " style="letter-spacing:-0.467px;left:860px;top:146px;">pu..._6</div>
<div class="t " style="left:910px;top:146px;font-size:12.5px">QPushButton</div>
<div class="a" style="left:857px;top:163px;width:288px;height:18px;background:#f5f5f5"></div>
<div class="t " style="letter-spacing:-0.467px;left:860px;top:164px;">pu..._7</div>
<div class="t " style="left:910px;top:164px;font-size:12.5px">QPushButton</div>
<div class="a" style="left:857px;top:181px;width:288px;height:18px;background:#d9d9d9;border-radius:3px 0 0 3px"></div>
<div class="t " style="letter-spacing:-0.467px;left:860px;top:182px;">pu..._8</div>
<div class="t " style="left:910px;top:182px;font-size:12.5px">QPushButton</div>
<div class="a" style="left:857px;top:199px;width:288px;height:4px;background:#f5f5f5"></div>
<div class="a" style="left:941px;top:201px;width:1px;height:2px;background:#444"></div>
<div class="a" style="left:817px;top:203px;width:328px;height:1px;background:#b9b9b9"></div>
<div class="a" style="left:817px;top:204px;width:328px;height:24px;background:#e6e6e6;border-bottom:1px solid #ababab"></div>
<div class="a" style="left:817px;top:204px;width:278px;height:23px;background:#fff"></div>
<div class="t c" style="left:821px;top:209px;color:#a2a2a2">过滤器</div>
<svg style="left:1098px;top:208px" width="15" height="15" viewBox="0 0 18 18"><defs><linearGradient id="pg2" x1="0" y1="0" x2="1" y2="1"><stop offset="0" stop-color="#98f880"/><stop offset=".5" stop-color="#30d41c"/><stop offset="1" stop-color="#10a408"/></linearGradient></defs><path d="M6.6 0.8 H11.4 V6.6 H17.2 V11.4 H11.4 V17.2 H6.6 V11.4 H0.8 V6.6 H6.6 Z" fill="url(#pg2)" stroke="#2cbc1e" stroke-width="1" stroke-linejoin="round"/><path d="M7.6 2 H10 M2 7.8 H6.6" stroke="#c8ffb8" stroke-width="1" stroke-opacity=".8"/></svg>
<svg style="left:1108px;top:218px" width="6" height="4" viewBox="0 0 6 4"><path d="M0 0 H6 L3 3.6 Z" fill="#444"/></svg>
<div class="a" style="left:1121px;top:214px;width:15px;height:4px;border-radius:1.5px;background:linear-gradient(#e8e8e8,#cfcfcf);border:1px solid #b8b8b8"></div>
<div class="a" style="left:1143px;top:220px;width:2px;height:3px;background:#999"></div>
<div class="a" style="left:817px;top:228px;width:328px;height:21px;background:#f0f0f0;border:1px solid #b4b4b4;border-right:0"></div>
<div class="t " style="left:821px;top:230.5px;font-size:12.5px;letter-spacing:.05px">pushButton_8 : QPushButton</div>
<div class="a" style="left:817px;top:249px;width:328px;height:25px;background:#fff"></div>
<div class="t c" style="left:821px;top:254px;">属性</div>
<div class="t c" style="left:972px;top:254px;">值</div>
<div class="a" style="left:966px;top:249px;width:1px;height:393px;background:#d2d2d2"></div>
<div class="a" style="left:817px;top:274px;width:328px;height:20px;background:#ffffbf;border-bottom:1px solid #d8d8d8"></div>
<div class="a" style="left:857px;top:274px;width:288px;height:19px;background:#ffffde"></div>
<div class="t c" style="left:860px;top:275.5px;">可翻译的</div>
<svg style="left:970px;top:278px" width="13" height="13" viewBox="0 0 13 13"><rect x="0" y="0" width="13" height="13" rx="3" fill="#0a5fbe"/><path d="M3.6 6.6 L5.6 8.6 L9.4 4.6" fill="none" stroke="#fff" stroke-width="1"/></svg>
<div class="a" style="left:817px;top:294px;width:328px;height:20px;background:#ffffbf;border-bottom:1px solid #d8d8d8"></div>
<div class="t c" style="left:860px;top:295.5px;">澄清</div>
<div class="a" style="left:817px;top:314px;width:328px;height:20px;background:#ffffbf;border-bottom:1px solid #d8d8d8"></div>
<div class="a" style="left:857px;top:314px;width:288px;height:19px;background:#ffffde"></div>
<div class="t c" style="left:860px;top:315.5px;">注释</div>
<div class="a" style="left:817px;top:334px;width:328px;height:20px;background:#ffffbf;border-bottom:1px solid #d8d8d8"></div>
<div class="t " style="left:840px;top:335.5px;">layoutDirection</div>
<div class="t " style="letter-spacing:-0.115px;left:970px;top:335.5px;">LeftToRight</div>
<div class="a" style="left:817px;top:354px;width:328px;height:20px;background:#ffffbf;border-bottom:1px solid #d8d8d8"></div>
<div class="a" style="left:837px;top:354px;width:308px;height:19px;background:#ffffde"></div>
<div class="t  b" style="letter-spacing:-0.126px;left:840px;top:355.5px;">autoFillBackground</div>
<div class="cb" style="top:358px"></div>
<div class="a" style="left:817px;top:374px;width:328px;height:20px;background:#ffffbf;border-bottom:1px solid #d8d8d8"></div>
<div class="a" style="left:837px;top:374px;width:129px;height:19px;background:#e9e9e9"></div>
<div class="t  b" style="letter-spacing:-0.205px;left:840px;top:375.5px;">styleSheet</div>
<div class="a" style="left:967px;top:374px;width:178px;height:19px;background:#fff"></div>
<div class="a" style="left:968px;top:374px;width:144px;height:19px;background:#fff;border-bottom:1px solid #808080"></div>
<div class="t " style="letter-spacing:0.218px;left:968px;top:375.5px;">ound-color: rgb(0, 0, 0);</div>
<div class="a" style="left:1114px;top:375px;width:18px;height:17px;background:#fdfdfd;border:1px solid #d2d2d2;border-bottom-color:#bcbcbc;border-radius:4px"></div>
<div class="t b" style="left:1117.5px;top:375px;font-size:12px">...</div>
<div class="a" style="left:1134px;top:375px;width:18px;height:17px;background:#fdfdfd;border:1px solid #d2d2d2;border-bottom-color:#bcbcbc;border-radius:4px"></div>
<svg style="left:1137.5px;top:379.5px" width="8" height="8" viewBox="0 0 8 8"><path d="M0 3.2 L3.6 0 V6.4 Z" fill="#8b0a0a"/><path d="M3.4 3.2 H5 C7.2 3.2 7.4 6 5.6 7" fill="none" stroke="#8b0a0a" stroke-width="1.4"/></svg>
<div class="a" style="left:817px;top:394px;width:328px;height:20px;background:#ffffbf;border-bottom:1px solid #d8d8d8"></div>
<div class="a" style="left:837px;top:394px;width:308px;height:19px;background:#ffffde"></div>
<div class="t " style="left:840px;top:395.5px;">locale</div>
<div class="t " style="letter-spacing:-0.385px;left:970px;top:395.5px;">Chinese, China</div>
<svg style="left:822px;top:401px" width="10" height="6" viewBox="0 0 10 6"><path d="M0.8 0.8 L4.8 4.9 L8.8 0.8" fill="none" stroke="#1e1e1e" stroke-width="1.5"/></svg>
<div class="a" style="left:817px;top:414px;width:328px;height:20px;background:#ffffbf;border-bottom:1px solid #d8d8d8"></div>
<div class="t c" style="left:860px;top:415.5px;">语言</div>
<div class="t " style="letter-spacing:-0.358px;left:970px;top:415.5px;">Chinese</div>
<div class="a" style="left:817px;top:434px;width:328px;height:20px;background:#ffffbf;border-bottom:1px solid #d8d8d8"></div>
<div class="a" style="left:857px;top:434px;width:288px;height:19px;background:#ffffde"></div>
<div class="t c" style="left:860px;top:435.5px;">国家</div>
<div class="t " style="letter-spacing:-0.474px;left:970px;top:435.5px;">China</div>
<div class="a" style="left:817px;top:454px;width:328px;height:20px;background:#ffffbf;border-bottom:1px solid #d8d8d8"></div>
<div class="t  b" style="letter-spacing:0.22px;left:840px;top:455.5px;">inputMethodHints</div>
<div class="t " style="letter-spacing:0.179px;left:970px;top:455.5px;">ImhNone</div>
<svg style="left:822px;top:461px" width="10" height="6" viewBox="0 0 10 6"><path d="M0.8 0.8 L4.8 4.9 L8.8 0.8" fill="none" stroke="#1e1e1e" stroke-width="1.5"/></svg>
<div class="a" style="left:817px;top:474px;width:328px;height:20px;background:#ffffbf;border-bottom:1px solid #d8d8d8"></div>
<div class="a" style="left:857px;top:474px;width:288px;height:19px;background:#ffffde"></div>
<div class="t " style="letter-spacing:0.179px;left:860px;top:475.5px;color:#8e8e8e;">ImhNone</div>
<svg style="left:970px;top:478px" width="13" height="13" viewBox="0 0 13 13"><rect x="0" y="0" width="13" height="13" rx="3" fill="#8c8c8c"/><path d="M3.6 6.6 L5.6 8.6 L9.4 4.6" fill="none" stroke="#fff" stroke-width="1"/></svg>
<div class="a" style="left:817px;top:494px;width:328px;height:20px;background:#ffffbf;border-bottom:1px solid #d8d8d8"></div>
<div class="t " style="letter-spacing:-0.086px;left:860px;top:495.5px;">ImhHiddenText</div>
<div class="cb" style="top:498px"></div>
<div class="a" style="left:817px;top:514px;width:328px;height:20px;background:#ffffbf;border-bottom:1px solid #d8d8d8"></div>
<div class="a" style="left:857px;top:514px;width:288px;height:19px;background:#ffffde"></div>
<div class="t " style="letter-spacing:-0.199px;left:860px;top:515.5px;">ImhSensitiveData</div>
<div class="cb" style="top:518px"></div>
<div class="a" style="left:817px;top:534px;width:328px;height:20px;background:#ffffbf;border-bottom:1px solid #d8d8d8"></div>
<div class="t " style="letter-spacing:0.119px;left:860px;top:535.5px;">ImhNoAutoUpp...</div>
<div class="cb" style="top:538px"></div>
<div class="a" style="left:817px;top:554px;width:328px;height:20px;background:#ffffbf;border-bottom:1px solid #d8d8d8"></div>
<div class="a" style="left:857px;top:554px;width:288px;height:19px;background:#ffffde"></div>
<div class="t " style="left:860px;top:555.5px;">ImhPreferNumb...</div>
<div class="cb" style="top:558px"></div>
<div class="a" style="left:817px;top:574px;width:328px;height:20px;background:#ffffbf;border-bottom:1px solid #d8d8d8"></div>
<div class="t " style="left:860px;top:575.5px;">ImhPreferUppe...</div>
<div class="cb" style="top:578px"></div>
<div class="a" style="left:817px;top:594px;width:328px;height:20px;background:#ffffbf;border-bottom:1px solid #d8d8d8"></div>
<div class="a" style="left:857px;top:594px;width:288px;height:19px;background:#ffffde"></div>
<div class="t " style="letter-spacing:-0.183px;left:860px;top:595.5px;">ImhPreferLower...</div>
<div class="cb" style="top:598px"></div>
<div class="a" style="left:817px;top:614px;width:328px;height:20px;background:#ffffbf;border-bottom:1px solid #d8d8d8"></div>
<div class="t " style="left:860px;top:615.5px;">ImhNoPredictiv...</div>
<div class="cb" style="top:618px"></div>
<div class="a" style="left:817px;top:634px;width:328px;height:20px;background:#ffffbf;border-bottom:1px solid #d8d8d8"></div>
<div class="a" style="left:857px;top:634px;width:288px;height:19px;background:#ffffde"></div>
<div class="t " style="left:860px;top:635.5px;">ImhDate</div>
<div class="cb" style="top:638px"></div>
<div class="a" style="left:302px;top:124px;width:196px;height:452px;background:#f0f0f0;border:1px solid #e3e3e3;box-shadow:inset 0 0 0 2.4px #fafafa,5px 5px 2px -2px rgba(0,0,0,.5)"></div>
<div class="a" style="left:330px;top:127px;width:3px;height:446px;background:#f9f9f9"></div>
<div class="sep" style="top:153px"></div>
<div class="sep" style="top:206px"></div>
<div class="sep" style="top:281px"></div>
<div class="sep" style="top:312px"></div>
<div class="sep" style="top:343px"></div>
<div class="sep" style="top:374px"></div>
<div class="sep" style="top:427px"></div>
<div class="sep" style="top:546px"></div>
<div class="t mi" style="top:131px">改变文本...</div>
<div class="t mi" style="top:162px">改变对象名称...</div>
<div class="t mi" style="top:184px">变型为</div>
<svg style="left:478px;top:186px" width="6" height="9" viewBox="0 0 6 9"><path d="M0.6 0.4 L5.2 4.4 L0.6 8.4 Z" fill="#111"/></svg>
<div class="t mi" style="top:215px">改变工具提示...</div>
<div class="t mi" style="top:237px">改变<span style="margin-right:3px">“</span>这是什么<span style="margin-left:.6px">”</span>...</div>
<div class="a" style="left:309px;top:259px;width:181px;height:14px;background:#0078d4;border-radius:5px"></div>
<div class="t mi" style="top:259px">改变样式表...</div>
<div class="t mi" style="top:290px">大小限定</div>
<svg style="left:478px;top:292px" width="6" height="9" viewBox="0 0 6 9"><path d="M0.6 0.4 L5.2 4.4 L0.6 8.4 Z" fill="#111"/></svg>
<div class="t mi" style="top:321px">提升为...</div>
<div class="t mi" style="top:352px">转到槽...</div>
<div class="t mi" style="top:383px">放到后面(B)</div>
<div class="t mi" style="top:405px">放到前面(F)</div>
<div class="t mi" style="top:436px">剪切(T)</div>
<div class="t " style="letter-spacing:0.237px;left:442px;top:436px;font-size:12.5px">Ctrl+X</div>
<div class="t mi" style="top:458px">复制(C)</div>
<div class="t " style="letter-spacing:0.203px;left:442px;top:458px;font-size:12.5px">Ctrl+C</div>
<div class="t mi" style="top:480px">粘贴(P)</div>
<div class="t " style="letter-spacing:0.237px;left:442px;top:480px;font-size:12.5px">Ctrl+V</div>
<div class="t mi" style="top:502px">全选(A)</div>
<div class="t " style="letter-spacing:0.237px;left:442px;top:502px;font-size:12.5px">Ctrl+A</div>
<div class="t mi" style="top:524px">删除(D)</div>
<div class="t mi" style="top:555px">布局</div>
<svg style="left:478px;top:557px" width="6" height="9" viewBox="0 0 6 9"><path d="M0.6 0.4 L5.2 4.4 L0.6 8.4 Z" fill="#111"/></svg>
<svg style="left:308px;top:382px" width="17" height="17" viewBox="0 0 17 17"><rect x="0.5" y="0.5" width="11" height="11" fill="#c4d6f6" stroke="#86a2dc"/><rect x="5" y="5" width="10.5" height="10.5" fill="#c6c6c6" stroke="#8e8e8e"/></svg>
<svg style="left:308px;top:404px" width="17" height="17" viewBox="0 0 17 17"><rect x="5" y="5" width="10.5" height="10.5" fill="#dadada" stroke="#b0b0b0"/><rect x="0.5" y="0.5" width="11" height="11" fill="#b4ccf8" stroke="#6a8cd4"/></svg>
<svg style="left:308px;top:435px" width="17" height="16" viewBox="0 0 17 16"><path d="M7.6 5.8 L15.2 12.6 M6.6 10 L15.8 4.2" stroke="#8c8c6c" stroke-width="2.5" stroke-linecap="round"/><path d="M7.6 5.8 L15.2 12.6 M6.6 10 L15.8 4.2" stroke="#f2f2ea" stroke-width="1.1" stroke-linecap="round"/><ellipse cx="6" cy="3.2" rx="1.9" ry="2.6" transform="rotate(-20 6 3.2)" fill="none" stroke="#e6b41c" stroke-width="1.7"/><ellipse cx="3.6" cy="11.4" rx="3.1" ry="2.1" transform="rotate(-25 3.6 11.4)" fill="none" stroke="#e6b41c" stroke-width="1.7"/><circle cx="9.6" cy="8" r=".7" fill="#555"/></svg>
<svg style="left:308px;top:457px" width="17" height="16" viewBox="0 0 17 16"><defs><linearGradient id="cp" x1="0" y1="0" x2="1" y2="1"><stop offset="0" stop-color="#fffde8"/><stop offset="1" stop-color="#f6e48a"/></linearGradient></defs><path d="M8.4 0.6 H13 L15.6 3.2 V11.4 H8.4 Z" fill="#ebe2b0" stroke="#c0a662" stroke-width=".8"/><path d="M0.6 1.6 H6.8 L9.6 4.4 V13.6 L0.6 15.2 Z" fill="url(#cp)" stroke="#c8a858" stroke-width=".8"/><path d="M6.8 1.6 V4.4 H9.6" fill="#fff" stroke="#c8a858" stroke-width=".6"/></svg>
<svg style="left:309px;top:479px" width="15" height="16" viewBox="0 0 15 16"><rect x="0.6" y="1.6" width="9.4" height="13.2" rx="1" fill="#e8c040" stroke="#a8841c" stroke-width=".8"/><rect x="2" y="0.4" width="6" height="2.6" fill="#5a5a5a"/><path d="M5.6 2.8 H11 L14 5.8 V15.4 H5.6 Z" fill="#fbf6d0" stroke="#c0a662" stroke-width=".8"/><path d="M11 2.8 V5.8 H14" fill="#fff" stroke="#c0a662" stroke-width=".6"/><path d="M0.4 12.6 C0.4 9.6 2.4 8.8 5 8.8 V6.8 L8.8 10 L5 13.2 V11.2 C3.4 11.2 2 11.4 0.4 12.6 Z" fill="#2a80e0" stroke="#1a4a94" stroke-width=".5"/></svg>
<div class="a" style="left:0;top:642px;width:1145px;height:1px;background:#b4b4b4"></div>
<div class="a" style="left:0;top:643px;width:1145px;height:1px;background:#e4e4e4"></div>
</body></html>
